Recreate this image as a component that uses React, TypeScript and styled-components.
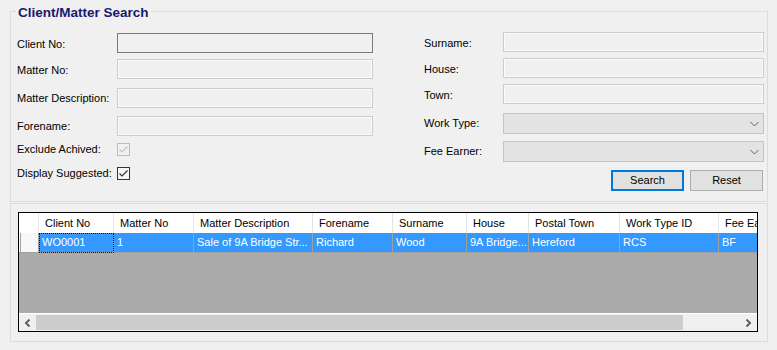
import React from "react";
import styled, { createGlobalStyle } from "styled-components";

const Global = createGlobalStyle`
  html, body { margin: 0; padding: 0; background: #f0f0f0; }
  body {
    font-family: "Liberation Sans", Arial, sans-serif;
    font-size: 11px;
    color: #000;
    width: 777px;
    height: 350px;
    overflow: hidden;
  }
  * { box-sizing: border-box; }
`;

const Page = styled.div`
  display: flex;
  flex-direction: column;
  padding: 11px 9px 0 10px;
`;

const GroupBox = styled.div<{ $h: number; $mt?: number }>`
  position: relative;
  border: 1px solid #dcdcdc;
  height: ${(p) => p.$h}px;
  margin-top: ${(p) => p.$mt ?? 0}px;
  flex: none;
`;

const GroupTitle = styled.div`
  position: absolute;
  top: -7px;
  left: 5px;
  padding: 0 2px;
  background: #f0f0f0;
  color: #191970;
  font-weight: bold;
  font-size: 13.5px;
  line-height: 16px;
  white-space: nowrap;
`;

const Form = styled.div`
  display: flex;
  height: 100%;
`;

const Column = styled.div<{ $w: number; $pt: number; $pl?: number; $ml?: number }>`
  display: flex;
  flex-direction: column;
  flex: none;
  width: ${(p) => p.$w}px;
  padding-top: ${(p) => p.$pt}px;
  padding-left: ${(p) => p.$pl ?? 0}px;
  margin-left: ${(p) => p.$ml ?? 0}px;
`;

const Row = styled.div<{ $h: number; $mt: number }>`
  display: flex;
  align-items: center;
  flex: none;
  height: ${(p) => p.$h}px;
  margin-top: ${(p) => p.$mt}px;
`;

const Label = styled.div<{ $w: number; $dy?: number }>`
  width: ${(p) => p.$w}px;
  flex: none;
  line-height: 13px;
  white-space: nowrap;
  padding-top: ${(p) => Math.max(0, p.$dy ?? 0) * 2}px;
  color: #000;
`;

const TextBox = styled.div<{ $w: number; $active?: boolean }>`
  width: ${(p) => p.$w}px;
  height: 20px;
  flex: none;
  background: #f0f0f0;
  border: 1px solid ${(p) => (p.$active ? "#7a7a7a" : "#cccccc")};
  box-shadow: ${(p) => (p.$active ? "none" : "inset 0 0 0 1px #fbfbfb")};
`;

const Combo = styled.div<{ $w: number }>`
  width: ${(p) => p.$w}px;
  height: 21px;
  flex: none;
  display: flex;
  align-items: center;
  justify-content: flex-end;
  padding-right: 4px;
  background: #e3e3e3;
  border: 1px solid #c4c4c4;
`;

const CheckBox = styled.div<{ $enabled?: boolean }>`
  width: 13px;
  height: 13px;
  flex: none;
  display: flex;
  align-items: center;
  justify-content: center;
  border: 1px solid ${(p) => (p.$enabled ? "#333333" : "#bcbcbc")};
  background: ${(p) => (p.$enabled ? "#f6f6f6" : "#f0f0f0")};
`;

const ButtonRow = styled.div`
  display: flex;
  justify-content: flex-end;
  gap: 6px;
  margin-top: 8px;
  padding-right: 1px;
`;

const Button = styled.button<{ $default?: boolean }>`
  width: 73px;
  height: 21px;
  padding: 0;
  font-family: "Liberation Sans", Arial, sans-serif;
  font-size: 11px;
  color: #000;
  background: #e1e1e1;
  border: ${(p) => (p.$default ? "2px solid #0078d7" : "1px solid #adadad")};
  line-height: 13px;
`;

const GridArea = styled.div`
  display: flex;
  padding: 8px 9px 0 7px;
`;

const Grid = styled.div`
  width: 740px;
  height: 120px;
  border: 1px solid #000;
  background: #ababab;
  display: flex;
  flex-direction: column;
  overflow: hidden;
`;

const COLS = "20px 75px 80px 119px 80px 74px 62px 91px 99px 100px";

const GridRow = styled.div<{ $selected?: boolean }>`
  display: grid;
  grid-template-columns: ${COLS};
  height: 20px;
  flex: none;
  background: ${(p) => (p.$selected ? "#3399ff" : "#ffffff")};
`;

const HeaderCell = styled.div`
  border-right: 1px solid #e5e5e5;
  padding-left: 6px;
  line-height: 20px;
  white-space: nowrap;
  overflow: hidden;
  color: #000;
`;

const RowHeaderCell = styled.div<{ $data?: boolean }>`
  background: ${(p) => (p.$data ? "#f8f8f8" : "#ffffff")};
  border-right: 1px solid ${(p) => (p.$data ? "#a0a0a0" : "#e5e5e5")};
  border-bottom: ${(p) => (p.$data ? "1px solid #a0a0a0" : "none")};
  box-shadow: ${(p) => (p.$data ? "inset 1px 0 0 #ffffff, inset 2px 0 0 #a0a0a0" : "none")};
`;

const DataCell = styled.div<{ $focus?: boolean }>`
  border-right: 1px solid #a0a0a0;
  border-bottom: 1px solid #a0a0a0;
  padding-left: 3px;
  line-height: 19px;
  color: #ffffff;
  white-space: nowrap;
  overflow: hidden;
  outline: ${(p) => (p.$focus ? "1px dotted #111" : "none")};
  outline-offset: -1px;
`;

const EmptyArea = styled.div`
  flex: 1;
`;

const ScrollBar = styled.div`
  height: 18px;
  flex: none;
  display: flex;
  align-items: center;
  border-top: 1px solid #ffffff;
  background: #f0f0f0;
`;

const ScrollButton = styled.div`
  width: 17px;
  height: 17px;
  flex: none;
  display: flex;
  align-items: center;
  justify-content: center;
`;

const Track = styled.div`
  flex: 1;
  height: 17px;
  display: flex;
  align-items: center;
`;

const Thumb = styled.div<{ $w: number }>`
  width: ${(p) => p.$w}px;
  height: 15px;
  background: #cdcdcd;
`;

const Chevron = () => (
  <svg width="9" height="6" viewBox="0 0 9 6">
    <polyline points="0.5,1 4.5,5 8.5,1" fill="none" stroke="#606060" strokeWidth="1" />
  </svg>
);

const Check = ({ color }: { color: string }) => (
  <svg width="11" height="11" viewBox="0 0 11 11">
    <polyline points="1.5,5.5 4,8 9.5,2.5" fill="none" stroke={color} strokeWidth="1.2" />
  </svg>
);

const Arrow = ({ dir }: { dir: "left" | "right" }) => (
  <svg width="7" height="8" viewBox="0 0 7 8">
    <polyline
      points={dir === "left" ? "5.5,0.5 2,4 5.5,7.5" : "1.5,0.5 5,4 1.5,7.5"}
      fill="none"
      stroke="#606060"
      strokeWidth="2"
    />
  </svg>
);

type Field =
  | { kind: "text"; label: string; mt: number; dy: number; active?: boolean }
  | { kind: "check"; label: string; mt: number; enabled?: boolean }
  | { kind: "combo"; label: string; mt: number };

const leftFields: Field[] = [
  { kind: "text", label: "Client No:", mt: 0, dy: 1, active: true },
  { kind: "text", label: "Matter No:", mt: 6, dy: 1 },
  { kind: "text", label: "Matter Description:", mt: 9, dy: 0 },
  { kind: "text", label: "Forename:", mt: 8, dy: 0 },
  { kind: "check", label: "Exclude Achived:", mt: 7 },
  { kind: "check", label: "Display Suggested:", mt: 11, enabled: true },
];

const rightFields: Field[] = [
  { kind: "text", label: "Surname:", mt: 0, dy: 1.5 },
  { kind: "text", label: "House:", mt: 6, dy: 1.5 },
  { kind: "text", label: "Town:", mt: 6, dy: 1.5 },
  { kind: "combo", label: "Work Type:", mt: 9 },
  { kind: "combo", label: "Fee Earner:", mt: 7 },
];

const renderField = (f: Field, labelW: number, inputW: number) => {
  if (f.kind === "text") {
    return (
      <Row key={f.label} $h={20} $mt={f.mt}>
        <Label $w={labelW} $dy={f.dy}>{f.label}</Label>
        <TextBox $w={inputW} $active={f.active} />
      </Row>
    );
  }
  if (f.kind === "combo") {
    return (
      <Row key={f.label} $h={21} $mt={f.mt}>
        <Label $w={labelW}>{f.label}</Label>
        <Combo $w={inputW}>
          <Chevron />
        </Combo>
      </Row>
    );
  }
  return (
    <Row key={f.label} $h={13} $mt={f.mt}>
      <Label $w={labelW}>{f.label}</Label>
      <CheckBox $enabled={f.enabled}>
        <Check color={f.enabled ? "#333333" : "#c4c4c4"} />
      </CheckBox>
    </Row>
  );
};

const headers = [
  "Client No",
  "Matter No",
  "Matter Description",
  "Forename",
  "Surname",
  "House",
  "Postal Town",
  "Work Type ID",
  "Fee Earner",
];

const rows = [
  ["WO0001", "1", "Sale of 9A Bridge Str...", "Richard", "Wood", "9A Bridge...", "Hereford", "RCS", "BF"],
];

export default function App() {
  return (
    <>
      <Global />
      <Page>
        <GroupBox $h={191}>
          <GroupTitle>Client/Matter Search</GroupTitle>
          <Form>
            <Column $w={362} $pt={21} $pl={6}>
              {leftFields.map((f) => renderField(f, 100, 256))}
            </Column>
            <Column $w={340} $pt={20} $ml={51}>
              {rightFields.map((f) => renderField(f, 79, 261))}
              <ButtonRow>
                <Button $default>Search</Button>
                <Button>Reset</Button>
              </ButtonRow>
            </Column>
          </Form>
        </GroupBox>
        <GroupBox $h={139} $mt={1}>
          <GridArea>
            <Grid>
              <GridRow>
                <RowHeaderCell />
                {headers.map((h) => (
                  <HeaderCell key={h}>{h}</HeaderCell>
                ))}
              </GridRow>
              {rows.map((r, i) => (
                <GridRow key={i} $selected>
                  <RowHeaderCell $data />
                  {r.map((c, j) => (
                    <DataCell key={j} $focus={j === 0}>
                      {c}
                    </DataCell>
                  ))}
                </GridRow>
              ))}
              <EmptyArea />
              <ScrollBar>
                <ScrollButton>
                  <Arrow dir="left" />
                </ScrollButton>
                <Track>
                  <Thumb $w={647} />
                </Track>
                <ScrollButton>
                  <Arrow dir="right" />
                </ScrollButton>
              </ScrollBar>
            </Grid>
          </GridArea>
        </GroupBox>
      </Page>
    </>
  );
}
